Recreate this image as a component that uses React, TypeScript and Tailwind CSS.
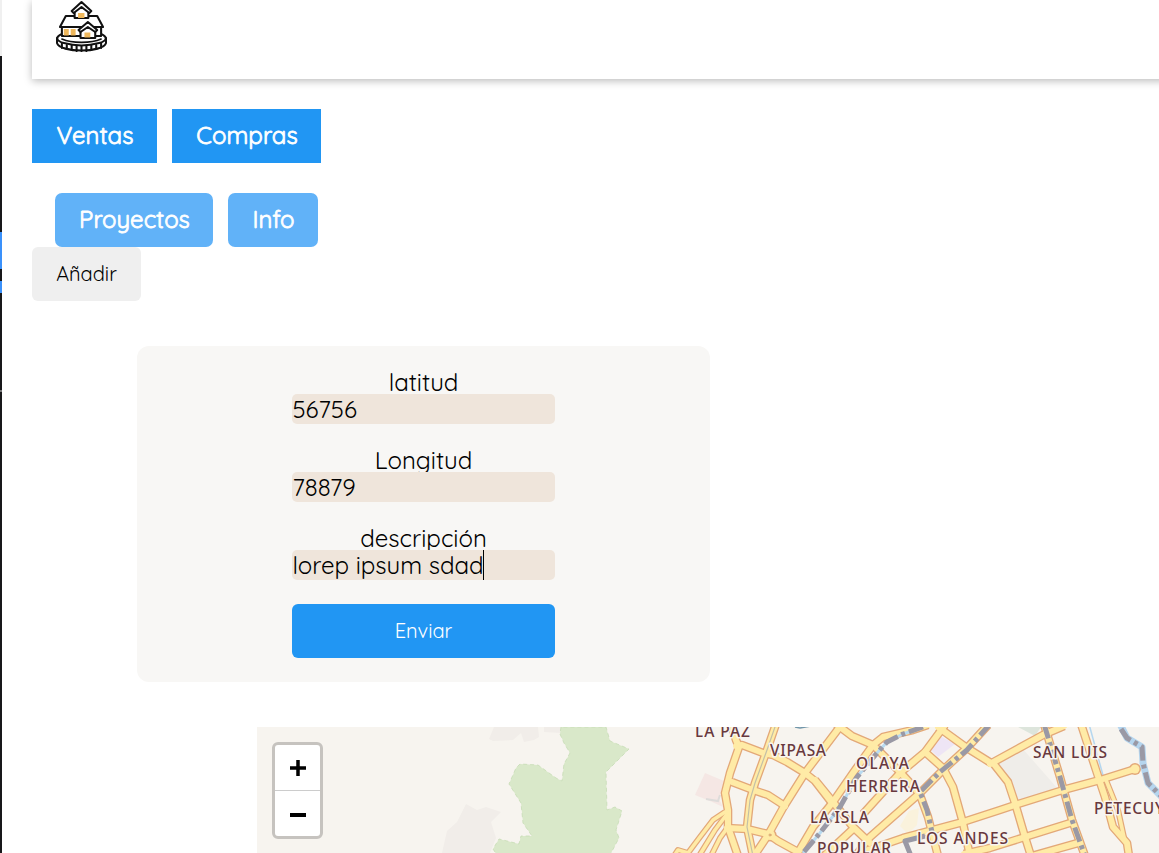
const roads = [
  'M731 724L736 740L739 747L730 773L725 793L728 810L728 827L738 856',
  'M736 746L742 745L763 753L773 755L787 762L805 773L815 781L832 803',
  'M776 724L767 750L755 783L750 800L747 827L753 856',
  'M842 724L805 773L783 808L768 835L754 856',
  'M732 782L753 790L768 795L785 806',
  'M727 828L747 829L768 834L778 841L798 852',
  'M725 812L713 820L700 837L688 853L678 850L674 856',
  'M727 814L715 830L699 856',
  'M728 827L720 838L711 856',
  'M873 745L853 773L833 802L813 827L796 856',
  'M836 724L852 736L873 745L900 772L912 785L920 795L928 817L938 856',
  'M873 745L883 737L913 730L928 725',
  'M815 780L833 802L853 827L870 843',
  'M824 856L853 829',
  'M863 814L900 773L925 752L945 725',
  'M938 727L967 748L991 763',
  'M988 725L967 748L943 770L920 793L870 837L854 858',
  'M925 752L943 768L953 787L963 823L970 856',
  'M865 851L903 838L963 822L1000 810L1015 805L1063 790L1100 780L1135 769',
  'M990 764L1043 735L1064 726',
  'M993 763L1008 782L1015 803L1025 837L1031 856',
  'M1044 724L1060 777L1072 820L1085 856',
  'M1081 724L1097 773L1105 797L1113 827L1127 843L1129 856',
  'M1106 780L1118 810L1125 842',
  'M964 854L990 848L1025 837L1070 823',
  'M1032 856L1078 843',
];

const narrow = new Set([6, 7, 8, 23]);

const places: [string, number, number, number][] = [
  ['LA PAZ', 695, 737, 55],
  ['VIPASA', 770, 755.5, 56],
  ['OLAYA', 856, 769, 53],
  ['HERRERA', 846, 792, 74],
  ['LA ISLA', 810, 823, 59],
  ['POPULAR', 817, 854, 74],
  ['LOS ANDES', 917, 844, 91],
  ['SAN LUIS', 1033, 758, 74],
  ['PETECUY', 1094, 814, 70],
];

function Logo() {
  return (
    <svg className="h-[52px] w-[51px]" viewBox="0 0 52 52" preserveAspectRatio="none" fill="none" stroke="#111" strokeWidth="2.1" strokeLinejoin="round" strokeLinecap="round">
      <path d="M1 38V43C4 53 48 53 51 43V38" fill="#fff" />
      <path d="M6 34C-1 37 0 41 8 43C19 46 33 46 44 43C52 41 53 37 46 34" fill="#fff" />
      <path d="M6 43V48M11 45V49M16 45V50M21 46V51M26 46V51M31 46V51M36 45V50M41 45V49M46 43V48" />
      <path d="M6 39C16 43.5 36 43.5 46 39" strokeWidth="1.6" />
      <path d="M6 26V36H46V26" fill="#fff" />
      <path d="M10 16H42L48 27H4Z" fill="#fff" />
      <path d="M19 10V18H33V10" fill="#fff" />
      <path d="M16 11L26 2L36 11L34 13L26 7L18 13Z" fill="#fff" />
      <path d="M25 29V38H40V29" fill="#fff" />
      <path d="M23 30L32.500 22L42 30L40 32L32.500 27L25 32Z" fill="#fff" />
      <path d="M22.500 13H29V18H22.500ZM8 29H13V35.500H8ZM15 29H20V35.500H15ZM29 32.500H35V37.500H29Z" fill="#efb85c" stroke="none" />
    </svg>
  );
}

function CityMap() {
  return (
    <svg className="block h-[126px] w-[902px]" viewBox="257 727 902 126">
      <rect x="257" y="727" width="902" height="126" fill="#f7f4ef" />
      <path d="M494 727L489 739L493 741L513 740L521 733L524 742L534 740L539 737L538 727ZM544 727V732L561 733V727ZM466 804L477 810L486 807L501 812L491 822L496 838L490 853H442L447 831L457 822Z" fill="#f1ede9" />
      <path d="M561 727L560 734L564 743L570 753L564 764L562 781L556 778L538 765L520 764L516 768L509 784L521 803L523 823L532 836H521L519 844L499 839L493 849L497 855H610L619 838L616 830L622 811L615 807L607 810L606 772L616 762L629 749L610 741L606 727Z" fill="#d9e8c9" stroke="#c6dcb5" strokeWidth="0.8" strokeDasharray="4 3" />
      <path d="M705 773L724 781L719 799L723 807L710 801L695 795Z" fill="#f5e7e4" />
      <path d="M706 799L718 801L720 795" fill="none" stroke="#dedcda" strokeWidth="2" />
      <path d="M940 736L955 744L938 757L930 749Z" fill="#eee5f5" />
      <path d="M900 826L909 811L919 808L917 825L908 834Z" fill="#faf2dc" />
      <path d="M1018 727H1041L1035 736Z" fill="#dde5dc" />
      <path d="M997 762L1022 748L1058 789L1018 801L1010 780Z" fill="#efede9" />
      <path d="M1089 724L1104 779" fill="none" stroke="#b5d7ef" strokeWidth="1.5" />
      <path d="M795 727L800 728L811 726" fill="none" stroke="#7196aa" strokeWidth="1.5" />
      <g fill="none" stroke="#e3a878" strokeLinejoin="round">
        {roads.map((d, i) => (
          <path key={i} d={d} strokeWidth={narrow.has(i) ? 6 : 8.6} />
        ))}
        <circle cx="1135" cy="769" r="6" fill="#e3a878" stroke="none" />
        <circle cx="770" cy="835" r="6.5" fill="#e3a878" stroke="none" />
      </g>
      <g fill="none" stroke="#ffeba6" strokeLinejoin="round" strokeLinecap="round">
        {roads.map((d, i) => (
          <path key={i} d={d} strokeWidth={narrow.has(i) ? 3.6 : 6} />
        ))}
        <circle cx="1135" cy="769" r="4.5" fill="#ffeba6" stroke="none" />
        <circle cx="770" cy="835" r="5" fill="#ffeba6" stroke="none" />
        <circle cx="770" cy="835" r="1" stroke="#d8a36e" strokeWidth="1" />
      </g>
      <path d="M776 724L767 750L755 783L750 800L747 827L753 856" fill="none" stroke="#c3c0a7" strokeWidth="1.2" />
      <g fill="none" strokeLinejoin="round">
        <path d="M923 727L903 734L887 742L877 753L857 777L840 807L820 833L803 853" stroke="#b8daf0" strokeWidth="3" />
        <path d="M1120 724L1127 738L1142 747L1143 763L1148 783L1162 797" stroke="#b5d5ee" strokeWidth="7" />
        <g stroke="#9a99a5" strokeWidth="5" strokeDasharray="15 4 4 4">
          <path d="M923 727L903 734L887 742L877 753L857 777L840 807L820 833L803 853" />
          <path d="M990 724L967 750L940 772L920 792L927 810L932 832" />
          <path d="M925 836L905 841L911 856" strokeDasharray="none" />
          <path d="M1044 724L1060 777L1072 820L1085 856" />
          <path d="M1121 729L1127 738L1142 747L1143 763L1148 783L1162 797" />
        </g>
      </g>
      <g fontFamily="Noto Sans, sans-serif" fontSize="15.5" fontWeight="500" fill="#68393e" stroke="#f8f4ef" strokeWidth="3" strokeLinejoin="round" paintOrder="stroke">
        {places.map(([name, x, y, width]) => (
          <text key={name} x={x} y={y} textLength={width} lengthAdjust="spacing">{name}</text>
        ))}
      </g>
    </svg>
  );
}

function Field({ label, value, caret }: { label: string; value: string; caret?: boolean }) {
  return (
    <div className="relative h-[78px]">
      <div className="h-6 text-center text-2xl leading-6 whitespace-nowrap">{label}</div>
      <input
        className="relative block h-[30px] w-full rounded-[5px] bg-[#efe5db] py-0 pr-0 pl-[0.5px] text-2xl leading-[30px] outline-none"
        defaultValue={value}
      />
      {caret && <span className="absolute top-6 left-[191px] h-[30px] w-px bg-black" />}
    </div>
  );
}

export default function App() {
  return (
    <div className="flex h-[853px] w-[1159px] overflow-hidden bg-white font-['Quicksand','Lato',sans-serif] text-black">
      <div className="flex w-[2px] shrink-0 flex-col bg-[#18181a]">
        <div className="h-14 bg-[#f0f0f0]" />
        <div className="mt-[176px] h-[37px] bg-[#3a91fb]" />
        <div className="mt-3 h-3 bg-[#3a91fb]" />
        <div className="mt-[97px] h-[2px] bg-[#777]" />
      </div>
      <div className="flex w-[1157px] shrink-0 flex-col">
        <header className="ml-[30px] h-[79px] w-[1160px] shrink-0 pl-6 shadow-[0_2px_8px_rgba(0,0,0,0.27)]">
          <Logo />
        </header>
        <nav className="mt-[30px] ml-[30px] flex h-[54px] shrink-0 gap-[15px] text-2xl font-normal text-white [-webkit-text-stroke:0.8px_white]">
          <button className="w-[125px] bg-[#2196f3] pb-0.5 pl-px">Ventas</button>
          <button className="w-[149px] bg-[#2196f3] pb-0.5 pl-px">Compras</button>
        </nav>
        <nav className="mt-[30px] ml-[53px] flex h-[54px] shrink-0 gap-[15px] text-2xl font-normal text-white [-webkit-text-stroke:0.8px_white]">
          <button className="w-[158px] rounded-[7px] bg-[#61b2f8] pb-0.5 pl-px">Proyectos</button>
          <button className="w-[90px] rounded-[7px] bg-[#61b2f8] pb-0.5 pl-px">Info</button>
        </nav>
        <button className="ml-[30px] h-[54px] w-[109px] shrink-0 rounded-[6px] bg-[#efefef] text-xl">Añadir</button>
        <form className="mt-[45px] ml-[135px] flex h-[336px] w-[573px] shrink-0 flex-col rounded-xl bg-[#f8f7f5] px-[155px] pt-6">
          <Field label="latitud" value="56756" />
          <Field label="Longitud" value="78879" />
          <Field label="descripción" value="lorep ipsum sdad" caret />
          <button type="button" className="h-[54px] w-full shrink-0 rounded-[6px] bg-[#2196f3] text-xl text-white">Enviar</button>
        </form>
        <section className="relative mt-[45px] ml-[255px] h-[126px] w-[902px] shrink-0">
          <CityMap />
          <div className="absolute top-[15px] left-[15px] flex h-[97px] w-[51px] flex-col overflow-hidden rounded-[6px] border-[3px] border-[#c6c3bf] bg-white">
            <button className="flex h-[46px] items-center justify-center border-b border-[#ccc]">
              <svg className="h-4 w-4" viewBox="0 0 16 16" stroke="#000" strokeWidth="3.5"><path d="M0 8H16M8 0V16" /></svg>
            </button>
            <button className="flex h-[45px] items-center justify-center pt-[3px]">
              <svg className="h-4 w-4" viewBox="0 0 16 16" stroke="#000" strokeWidth="4"><path d="M0 8H16" /></svg>
            </button>
          </div>
        </section>
      </div>
    </div>
  );
}
